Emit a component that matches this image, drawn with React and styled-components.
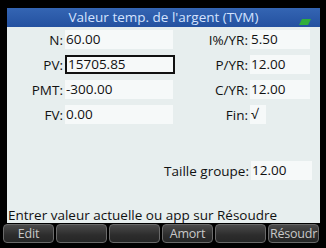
import React from "react";
import styled, { createGlobalStyle } from "styled-components";

const Global = createGlobalStyle`
  html, body { margin: 0; padding: 0; background: #000; }
  body { font-family: "Open Sans", "Noto Sans", sans-serif; }
`;

const Screen = styled.div`
  width: 326px;
  height: 248px;
  background: #000;
  display: flex;
  flex-direction: column;
  padding-top: 8px;
  box-sizing: border-box;
  overflow: hidden;
`;

const TitleBar = styled.div`
  position: relative;
  margin: 0 6px 0 7px;
  height: 19px;
  background: linear-gradient(#3465b3, #2451a0);
  color: #d4e3ff;
  font-size: 13.5px;
  line-height: 19px;
  text-align: center;
`;

const Battery = styled.svg`
  position: absolute;
  right: 9px;
  bottom: 2px;
`;

const Body = styled.div`
  margin: 0 6px 0 7px;
  height: 196px;
  background: #e7eeee;
  display: flex;
  flex-direction: column;
  font-size: 13.5px;
  color: #111;
`;

const Grid = styled.div`
  display: grid;
  grid-template-columns: 58px 110px 75px 62px;
  grid-auto-rows: 25px;
  align-items: center;
`;

const Label = styled.div`
  text-align: right;
  padding-right: 2px;
  white-space: nowrap;
`;

const Field = styled.div`
  height: 19px;
  box-sizing: border-box;
  background: #f6f9f9;
  width: ${(p) => p.$w || 108}px;
  padding-left: 1px;
  border: ${(p) => (p.$active ? "2px solid #111" : "none")};
  line-height: ${(p) => (p.$active ? "15px" : "19px")};
  white-space: nowrap;
`;

const GroupRow = styled.div`
  display: flex;
  align-items: center;
  justify-content: flex-end;
  height: 25px;
  margin-top: 31px;
  padding-right: 0;
  width: 305px;
`;

const Status = styled.div`
  margin-top: auto;
  padding-left: 1px;
  line-height: 16px;
  white-space: nowrap;
`;

const Keys = styled.div`
  display: flex;
  gap: 2px;
  padding-left: 3px;
  margin-top: 1px;
  height: 19px;
`;

const Key = styled.div`
  width: 51px;
  height: 19px;
  box-sizing: border-box;
  border: 1px solid #6a6a6a;
  border-radius: 4px;
  background: linear-gradient(#4a4a4a, #2c2c2c 60%, #262626);
  color: #c8c8c8;
  font-size: 12.5px;
  line-height: 17px;
  text-align: center;
  overflow: hidden;
  white-space: nowrap;
  letter-spacing: -0.2px;
`;

export default function App() {
  return (
    <>
      <Global />
      <Screen>
        <TitleBar>
          Valeur temp. de l'argent (TVM)
          <Battery width="12" height="6" viewBox="0 0 12 6">
            <polygon points="3,0 12,0 9,6 0,6" fill="#2fae3a" />
          </Battery>
        </TitleBar>
        <Body>
          <Grid>
            <Label>N:</Label>
            <Field>60.00</Field>
            <Label>I%/YR:</Label>
            <Field $w={60}>5.50</Field>

            <Label>PV:</Label>
            <Field $active $w={110}>15705.85</Field>
            <Label>P/YR:</Label>
            <Field $w={60}>12.00</Field>

            <Label>PMT:</Label>
            <Field>-300.00</Field>
            <Label>C/YR:</Label>
            <Field $w={60}>12.00</Field>

            <Label>FV:</Label>
            <Field>0.00</Field>
            <Label>Fin:</Label>
            <Field $w={16}>√</Field>
          </Grid>
          <GroupRow>
            <Label>Taille groupe:</Label>
            <Field $w={61}>12.00</Field>
          </GroupRow>
          <Status>Entrer valeur actuelle ou app sur Résoudre</Status>
        </Body>
        <Keys>
          <Key>Edit</Key>
          <Key />
          <Key />
          <Key>Amort</Key>
          <Key />
          <Key>Résoudr</Key>
        </Keys>
      </Screen>
    </>
  );
}
